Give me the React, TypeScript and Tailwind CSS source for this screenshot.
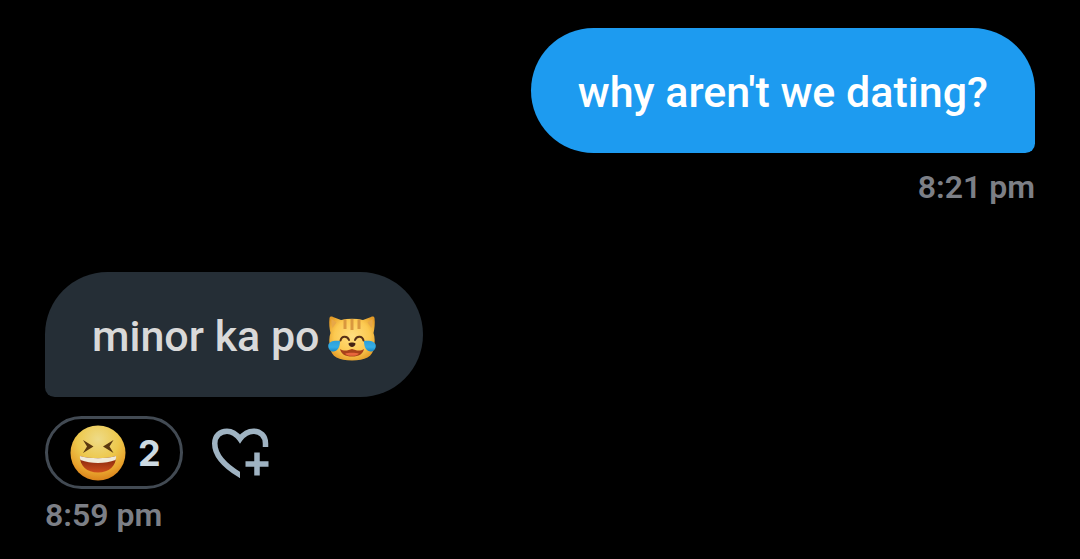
import React from 'react';

const CatJoyEmoji: React.FC = () => (
  <svg role="img" aria-label="Cat with tears of joy" viewBox="0 -3 48 48" className="w-12 h-12 shrink-0">
    <defs>
      <radialGradient id="catFace" cx="0.5" cy="0.45" r="0.6">
        <stop offset="0" stopColor="#ffdf80" />
        <stop offset="0.65" stopColor="#fcc950" />
        <stop offset="1" stopColor="#e39a26" />
      </radialGradient>
      <linearGradient id="catTear" x1="0" y1="0" x2="0" y2="1">
        <stop offset="0" stopColor="#2f9fd8" />
        <stop offset="0.6" stopColor="#35aee6" />
        <stop offset="1" stopColor="#1686c6" />
      </linearGradient>
    </defs>
    <path
      d="M1.500 2C2 .5 3.500 .3 5 1L13 4C20 2.300 28 2.300 35 4L43 1C44.500 .3 46 .5 46.500 2C47.200 7 46.500 13 45.500 17C47 21 47 27 46 31C45 41 37 44.500 24 44.500S3 41 2 31C1 27 1 21 2.500 17C1.500 13 .8 7 1.500 2Z"
      fill="url(#catFace)"
    />
    <path d="M3.500 3L8.500 6.500L4.500 12C3.500 9 3.300 6 3.500 3ZM44.500 3L39.500 6.500L43.500 12C44.500 9 44.700 6 44.500 3Z" fill="#e8a848" />
    <path d="M17 3.500V13M24 3V14M31 3.500V13" fill="none" stroke="#d9983f" strokeWidth="3" />
    <path d="M12.500 24.500C13.500 19.500 19.500 19.500 21 24M27 24C28.500 19.500 34.500 19.500 35.500 24.500" fill="none" stroke="#573016" strokeWidth="2" strokeLinecap="round" />
    <path d="M12 33C16 35.500 20 34.500 24 33C28 34.500 32 35.500 36 33C35 38 31 40.500 24 40.500S13 38 12 33Z" fill="#a8411a" />
    <path d="M17 37.800C20 36.500 28 36.500 31 37.800C29 39.500 27 39.800 24 39.800S19 39.500 17 37.800Z" fill="#e8663c" />
    <path d="M20.500 27.500C22 26.300 26 26.300 27.500 27.500C27.500 29.500 25.500 31 24 31S20.500 29.500 20.500 27.500Z" fill="#432313" />
    <path d="M12 25C7 24 1 25 .3 29C-.3 34 4 36.500 7.500 35C11 33.500 12 29 12 25ZM36 25C41 24 47 25 47.700 29C48.300 34 44 36.500 40.500 35C37 33.500 36 29 36 25Z" fill="url(#catTear)" />
  </svg>
);

const LaughEmoji: React.FC = () => (
  <svg aria-hidden="true" viewBox="0 0 56 56" className="w-14 h-14 shrink-0">
    <defs>
      <radialGradient id="laughFace" cx="0.5" cy="0.25" r="0.76">
        <stop offset="0" stopColor="#eedb88" />
        <stop offset="0.5" stopColor="#edc84c" />
        <stop offset="0.8" stopColor="#e8a22c" />
        <stop offset="1" stopColor="#d9801a" />
      </radialGradient>
      <linearGradient id="laughMouth" x1="0" y1="0" x2="0" y2="1">
        <stop offset="0" stopColor="#7b210a" />
        <stop offset="1" stopColor="#cf4f1c" />
      </linearGradient>
    </defs>
    <circle cx="28" cy="28" r="27.5" fill="url(#laughFace)" />
    <path d="M13 15L23.500 21.500L13 28L17 21.500ZM43.500 15L33 21.500L43.500 28L39.500 21.500Z" fill="#5a380f" />
    <path d="M10 31C20 34 36 34 46 31C46.500 41 39 47.500 28 47.500S9.500 41 10 31Z" fill="url(#laughMouth)" />
    <path d="M10 31C20 34 36 34 46 31C46.300 32.500 46 33.500 45.500 35C35 39 21 39 10.500 35C10 33.500 9.700 32.500 10 31Z" fill="#f0ead8" />
  </svg>
);

const HeartPlusIcon: React.FC = () => (
  <svg aria-hidden="true" viewBox="0 0 57 51" className="w-[57px] h-[51px]" fill="none" stroke="#9fb3c2" strokeWidth="5.5">
    <clipPath id="heartCut">
      <path d="M0 0H57V20H28V51H0Z" />
    </clipPath>
    <path
      clipPath="url(#heartCut)"
      d="M53.500 20V16.500C53.500 9 48.500 4.200 41.500 4.200C36 4.200 32 6.500 28 12C24 6.500 20 4.200 15 4.200C8 4.200 2.750 9 2.750 16.500C2.750 29 13 39 28 48L34 51.500"
    />
    <path d="M45 25.500V48.500M33.500 37H56.500" />
  </svg>
);

const App: React.FC = () => {
  return (
    <main className="min-h-screen bg-black px-[45px] pt-7 pb-6 font-[Roboto,sans-serif]">
      <section className="flex flex-col items-end">
        <p className="flex items-center h-[125px] px-[47px] pt-1 rounded-[64px] rounded-br-[10px] bg-[#1d9bf0] text-[43px] font-medium text-white">
          why aren't we dating?
        </p>
        <time className="mt-3 text-[32px] leading-[44px] font-semibold text-[#7c7f86]">8:21 pm</time>
      </section>

      <section className="mt-[63px] flex flex-col items-start">
        <p className="flex items-center gap-2 h-[125px] px-[47px] pt-1 rounded-[64px] rounded-bl-[10px] bg-[#252e36] text-[43px] font-medium text-[#d9d9d9]">
          minor ka po
          <CatJoyEmoji />
        </p>
        <div className="mt-[19px] flex items-center gap-[29px]">
          <button className="flex items-center gap-3 h-[73px] pl-[22px] pr-[19px] rounded-full border-3 border-[#424a53] font-[Inter,sans-serif] text-[36px] font-bold text-[#cddae2]">
            <LaughEmoji />
            2
          </button>
          <button aria-label="Add reaction">
            <HeartPlusIcon />
          </button>
        </div>
        <time className="mt-1 text-[32px] leading-[44px] font-semibold text-[#7c7f86]">8:59 pm</time>
      </section>
    </main>
  );
};

export default App;
